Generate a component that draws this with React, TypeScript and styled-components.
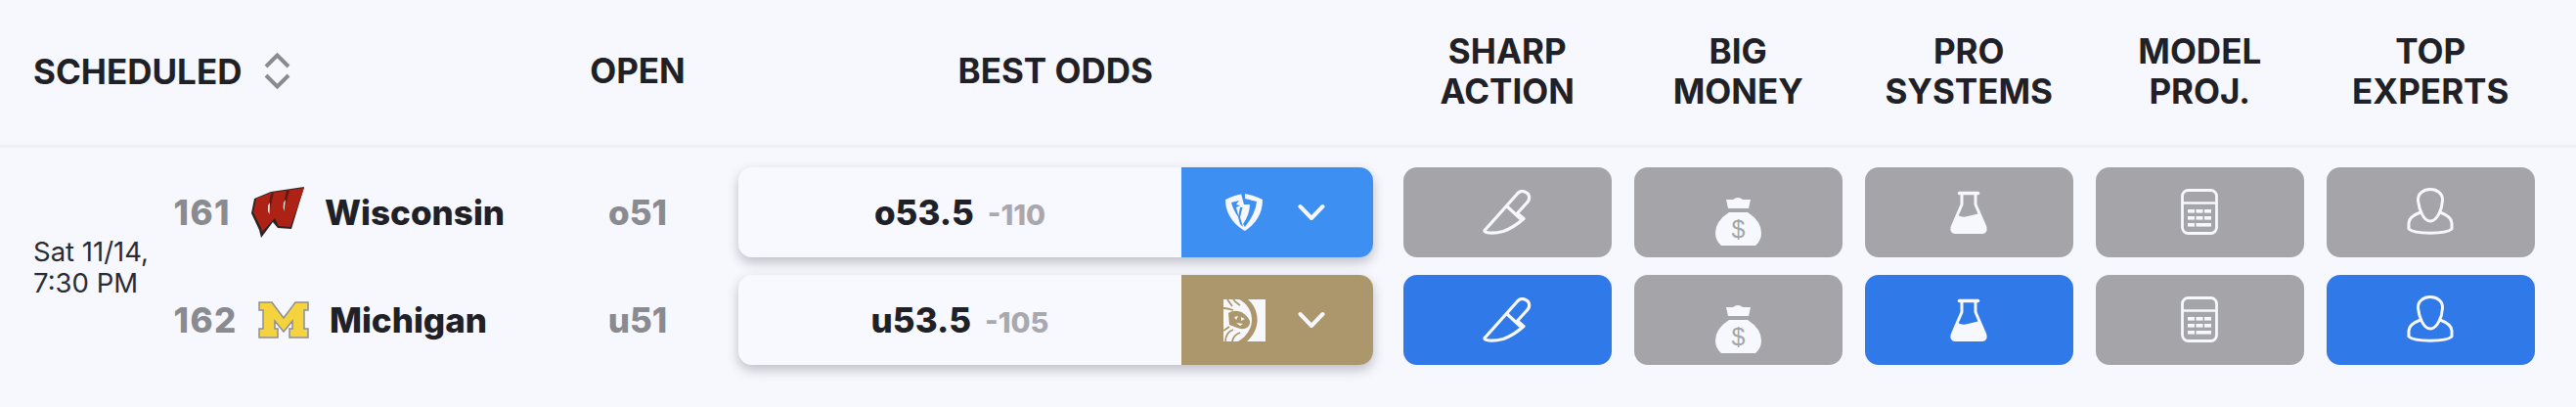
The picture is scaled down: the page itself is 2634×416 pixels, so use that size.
import React from 'react';
import styled, { createGlobalStyle } from 'styled-components';

const GlobalStyle = createGlobalStyle`
  html, body {
    margin: 0;
    padding: 0;
    background: #F7F8FD;
    font-family: 'Inter', 'Liberation Sans', sans-serif;
  }
`;

const COLUMNS = '120px 371.5px 159px 656.5px repeat(5, 212.5px)';
const GRAY = '#A5A4A9';

const Page = styled.div`
  width: 2634px;
  height: 416px;
  overflow: hidden;
  background: #F7F8FD;
  color: #1F2127;
`;

const HeaderRow = styled.div`
  display: grid;
  grid-template-columns: ${COLUMNS};
  column-gap: 23.5px;
  align-items: center;
  box-sizing: border-box;
  height: 151px;
  padding: 0 0 3px 34px;
  border-bottom: 3px solid #EFF0F5;
`;

const SortHeader = styled.div`
  grid-column: span 2;
  display: flex;
  align-items: center;
  gap: 23px;
  font-size: 35px;
  font-weight: 700;
`;

const HeaderCell = styled.div<{ $inset?: boolean }>`
  text-align: center;
  font-size: 35px;
  font-weight: 700;
  line-height: 41px;
  padding-right: ${props => (props.$inset ? '8px' : '0')};
`;

const Body = styled.div`
  display: grid;
  grid-template-columns: ${COLUMNS};
  grid-auto-rows: 92px;
  column-gap: 23.5px;
  row-gap: 18px;
  padding: 20px 0 0 34px;
`;

const TimeCell = styled.div`
  grid-row: span 2;
  align-self: center;
  font-size: 27.5px;
  line-height: 32px;
  color: #2A2C33;
  white-space: nowrap;
  padding-top: 2px;
`;

const TeamCell = styled.div`
  display: flex;
  align-items: center;
  gap: 21px;
`;

const RotationNumber = styled.span`
  font-size: 35px;
  font-weight: 800;
  letter-spacing: 1.5px;
  color: #8A8A91;
`;

const TeamName = styled.span`
  font-size: 35px;
  font-weight: 800;
  color: #1F2127;
`;

const OpenCell = styled.div`
  display: flex;
  align-items: center;
  justify-content: center;
  font-size: 35px;
  font-weight: 800;
  color: #8A8A91;
`;

const OddsCell = styled.div`
  padding-right: 8px;
`;

const OddsCard = styled.div`
  display: flex;
  height: 92px;
  border-radius: 14px;
  overflow: hidden;
  background: #F8F9FE;
  box-shadow: 0 5px 12px rgba(40, 40, 60, 0.28);
`;

const OddsValue = styled.div`
  flex: 1;
  display: flex;
  align-items: baseline;
  justify-content: center;
  gap: 14px;
  padding-top: 25px;
  font-size: 35px;
  font-weight: 800;
  color: #1F2127;
`;

const OddsPrice = styled.span`
  font-size: 29px;
  font-weight: 800;
  color: #A8A8AE;
`;

const BookChip = styled.div<{ $color: string }>`
  width: 195.5px;
  background: ${props => props.$color};
  display: flex;
  align-items: center;
  padding-left: 42px;
  box-sizing: border-box;
`;

const BookLogo = styled.div`
  width: 44px;
  display: flex;
  justify-content: center;
`;

const Chevron = styled.svg`
  margin-left: 33px;
`;

const PickButton = styled.div<{ $active?: boolean }>`
  display: flex;
  align-items: center;
  justify-content: center;
  border-radius: 14px;
  background: ${props => (props.$active ? '#2F79E8' : GRAY)};
`;

const WhiteStroke = {
  fill: 'none',
  stroke: '#F7F8FD',
  strokeWidth: 3,
  strokeLinecap: 'round',
  strokeLinejoin: 'round',
} as const;

const SortIcon = () => (
  <svg width="27" height="37" viewBox="0 0 27 37" fill="none" stroke="#8A8A91" strokeWidth="4">
    <path d="M2 14 L13.5 2.5 L25 14" />
    <path d="M2 23 L13.5 34.5 L25 23" />
  </svg>
);

const WisconsinLogo = () => (
  <svg width="54" height="52" viewBox="0 0 54 52">
    <path d="M3 12 L20 5 L54 0 L41 43 L27 42 L22 36 L10 52 L8 44 L0 27 Z" fill="#2A2426" />
    <path d="M5 12 L20 6 L54 1 L40 41 L28 40 L24 32 L11 46 L10 42 L2 26 Z" fill="#AD2215" />
    <path d="M20 7 L23 6 L18 27 L17 22 Z" fill="#5E1A14" />
    <path d="M36 4 L39 3.5 L33 25 L32 20 Z" fill="#5E1A14" />
    <path d="M17 19 L19 16 L18.5 28 L17 25 Z" fill="#F0E4D8" />
    <path d="M33 16 L35 13 L33.5 25 L32.5 21 Z" fill="#F0E4D8" />
  </svg>
);

const MichiganLogo = () => (
  <svg width="52" height="38" viewBox="0 0 52 38">
    <path
      d="M1 1 H14 L26 17 L38 1 H51 V9 H47 V28 H51 V37 H32 V28 H35 V20 L26 31 L17 20 V28 H20 V37 H1 V28 H5 V9 H1 Z"
      fill="#F5D33F"
      stroke="#8D8F97"
      strokeWidth="1.5"
    />
  </svg>
);

const FanDuelLogo = () => (
  <svg width="38" height="38" viewBox="0 0 38 38">
    <path d="M0 6 Q10 1 19 0 Q28 1 38 6 Q38 26 20 38 L18 37 Q0 25 0 6 Z" fill="#F7F8FD" />
    <path d="M6 9 L14 7 L11 11 L15 12 L11 14 L14 25 Q8 17 6 9 Z" fill="#3D8FF2" />
    <path d="M16 0 L20 0 L20 5 L32 8 Q31 20 20 34 L18 31 Q25 21 25 11 L19 11 Z" fill="#3D8FF2" />
    <path d="M15 14 L17.5 14 L15 24 L18 34 L15 31 L13 24 Z" fill="#3D8FF2" />
  </svg>
);

const MgmLogo = () => (
  <svg width="43" height="43" viewBox="0 0 43 43">
    <rect width="43" height="43" fill="#F7F8FD" />
    <path d="M16 0 C32 8 35 31 15 43 L24 43 C39 30 37 10 25 0 Z" fill="#AB976B" />
    <path d="M5 14 C13 9 23 13 27 22 C28 29 20 32 14 29 L6 26 Z" fill="#AB976B" />
    <path d="M11 18 L15 17 L13 21 Z M18 18 L22 20 L18 22 Z M13 24 L20 25 L17 27 Z" fill="#F7F8FD" />
    <g fill="none" stroke="#AB976B" strokeWidth="1.8">
      <path d="M4 0 L9 7 M10 0 C12 3 14 4 17 6" />
      <path d="M0 9 C4 9 7 10 10 11" />
      <path d="M2 43 C2 36 6 32 10 31 M9 43 C10 38 14 35 17 34 M0 32 L6 28" />
    </g>
  </svg>
);

const DownChevron = () => (
  <Chevron width="28" height="18" viewBox="0 0 28 18" fill="none" stroke="#F7F8FD" strokeWidth="4" strokeLinecap="round" strokeLinejoin="round">
    <path d="M2.5 3 L14 15 L25.5 3" />
  </Chevron>
);

const KnifeIcon = () => (
  <svg width="50" height="46" viewBox="0 0 50 46" {...WhiteStroke} strokeWidth="3.2">
    <path d="M2.5 41 L36 3.5 Q39 0.5 43 2 Q48.5 4 47.5 9.5 Q47 11.5 45.5 13 L35.5 24 L42 29.5 Q32 38.5 21 42.5 Q11 45 4 43.5 Q1 42.5 2.5 41 Z" />
    <path d="M25 17 L38 29" />
  </svg>
);

const MoneyBagIcon = ({ color }: { color: string }) => (
  <svg width="47" height="50" viewBox="0 0 47 50" style={{ marginTop: 18 }}>
    <path d="M11 3 L18 3 Q23 -1 28 3 L36 3 L34 12 L13 12 Z" fill="#F7F8FD" />
    <path d="M14 16 L33 16 Q47 25 47 37 Q47 45 41 50 L6 50 Q0 45 0 37 Q0 25 14 16 Z" fill="#F7F8FD" />
    <text x="23.5" y="42" fontSize="25" fontFamily="'Liberation Sans', sans-serif" textAnchor="middle" fill={color}>$</text>
  </svg>
);

const FlaskIcon = () => (
  <svg width="38" height="44" viewBox="0 0 38 44" {...WhiteStroke} style={{ marginBottom: 1 }}>
    <path d="M9.5 2.5 H28.5" strokeWidth="3.5" />
    <path d="M12 3 V14 L2.5 36 Q0.5 42 5 42.5 H33 Q37.5 42 35.5 36 L26 14 V3" />
    <path d="M8 25 Q13 28 18 26 Q23 25 30 23 L36 39 Q36 42 33 42 H5 Q2 42 2 39 Z" fill="#F7F8FD" stroke="none" />
  </svg>
);

const CalculatorIcon = () => (
  <svg width="38" height="47" viewBox="0 0 38 47" style={{ marginBottom: 2 }}>
    <rect x="1.5" y="1.5" width="35" height="44" rx="6" fill="none" stroke="#F7F8FD" strokeWidth="2.8" />
    <path d="M2 14.5 H36" stroke="#F7F8FD" strokeWidth="2.4" />
    <g fill="#F7F8FD">
      <rect x="7" y="21" width="7" height="3.6" />
      <rect x="15.5" y="21" width="7" height="3.6" />
      <rect x="24" y="21" width="7" height="3.6" />
      <rect x="7" y="28" width="7" height="3.6" />
      <rect x="15.5" y="28" width="7" height="3.6" />
      <rect x="24" y="28" width="7" height="3.6" />
      <rect x="7" y="35" width="7" height="3.6" />
      <rect x="15.5" y="35" width="15.5" height="3.6" />
    </g>
  </svg>
);

const PersonIcon = () => (
  <svg width="48" height="48" viewBox="0 0 48 48" {...WhiteStroke} style={{ marginBottom: 2 }}>
    <path d="M24 1.5 C31 1.5 37 6 36.5 13 C36 22 31 34 24 34 C17 34 12.5 22 11.5 13 C11 6 17 1.5 24 1.5 Z" />
    <path d="M14 25 C6 28 2 31 2 36 V42 C8 47.5 40 47.5 46 42 V36 C46 31 42 28 34 25" />
  </svg>
);

export default function App() {
  return (
    <Page>
      <GlobalStyle />
      <HeaderRow>
        <SortHeader>
          SCHEDULED
          <SortIcon />
        </SortHeader>
        <HeaderCell>OPEN</HeaderCell>
        <HeaderCell $inset>BEST ODDS</HeaderCell>
        <HeaderCell>SHARP<br />ACTION</HeaderCell>
        <HeaderCell>BIG<br />MONEY</HeaderCell>
        <HeaderCell>PRO<br />SYSTEMS</HeaderCell>
        <HeaderCell>MODEL<br />PROJ.</HeaderCell>
        <HeaderCell>TOP<br />EXPERTS</HeaderCell>
      </HeaderRow>
      <Body>
        <TimeCell>Sat 11/14,<br />7:30 PM</TimeCell>
        <TeamCell>
          <RotationNumber>161</RotationNumber>
          <WisconsinLogo />
          <TeamName>Wisconsin</TeamName>
        </TeamCell>
        <OpenCell>o51</OpenCell>
        <OddsCell>
          <OddsCard>
            <OddsValue>o53.5 <OddsPrice>-110</OddsPrice></OddsValue>
            <BookChip $color="#3D8FF2">
              <BookLogo><FanDuelLogo /></BookLogo>
              <DownChevron />
            </BookChip>
          </OddsCard>
        </OddsCell>
        <PickButton><KnifeIcon /></PickButton>
        <PickButton><MoneyBagIcon color={GRAY} /></PickButton>
        <PickButton><FlaskIcon /></PickButton>
        <PickButton><CalculatorIcon /></PickButton>
        <PickButton><PersonIcon /></PickButton>

        <TeamCell>
          <RotationNumber>162</RotationNumber>
          <MichiganLogo />
          <TeamName>Michigan</TeamName>
        </TeamCell>
        <OpenCell>u51</OpenCell>
        <OddsCell>
          <OddsCard>
            <OddsValue>u53.5 <OddsPrice>-105</OddsPrice></OddsValue>
            <BookChip $color="#AB976B">
              <BookLogo><MgmLogo /></BookLogo>
              <DownChevron />
            </BookChip>
          </OddsCard>
        </OddsCell>
        <PickButton $active><KnifeIcon /></PickButton>
        <PickButton><MoneyBagIcon color={GRAY} /></PickButton>
        <PickButton $active><FlaskIcon /></PickButton>
        <PickButton><CalculatorIcon /></PickButton>
        <PickButton $active><PersonIcon /></PickButton>
      </Body>
    </Page>
  );
}
